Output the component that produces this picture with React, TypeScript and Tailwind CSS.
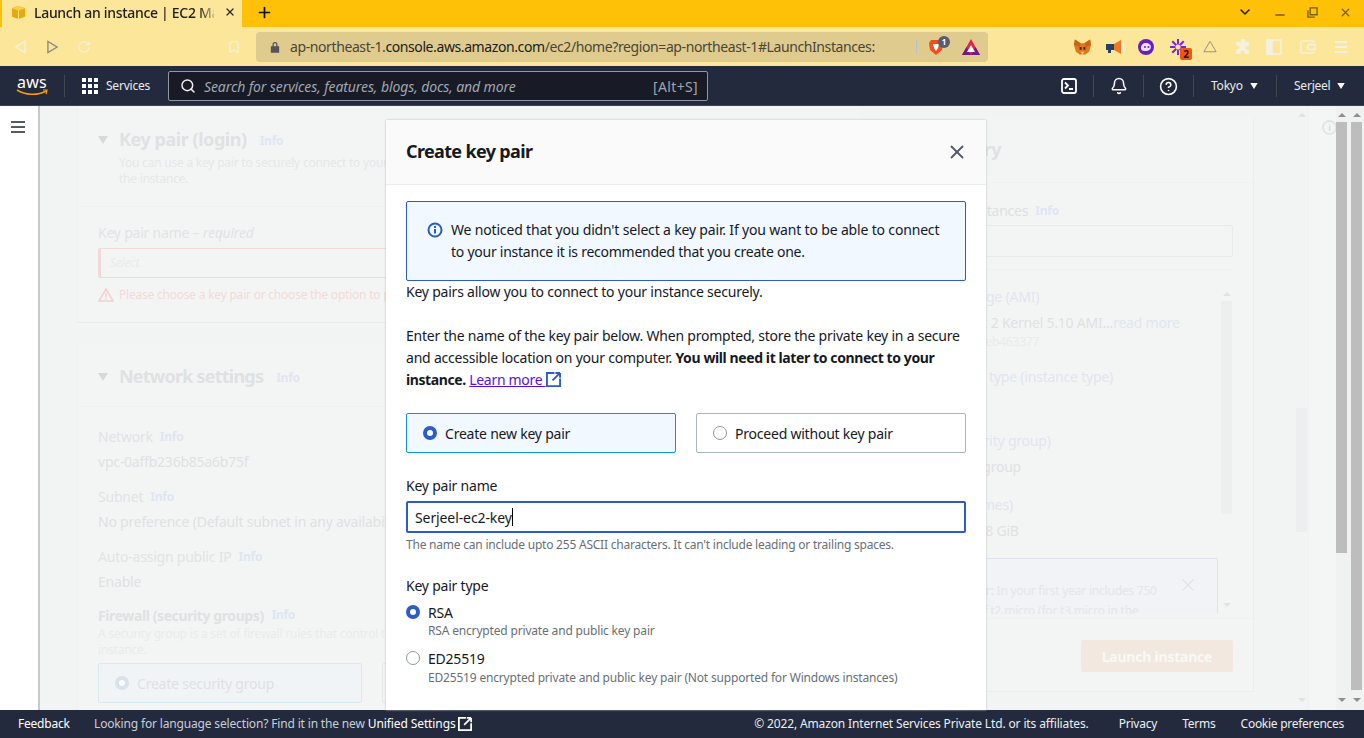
import React from 'react';
import { Bell, Bookmark, ChevronDown, CircleHelp, Minus, Plus, RotateCw, Search, X } from 'lucide-react';

const ExternalIcon: React.FC<{ className?: string }> = ({ className }) => (
  <svg viewBox="0 0 16 16" fill="none" stroke="currentColor" strokeWidth="2" className={className}>
    <path d="M9 1H1v14h14V7" />
    <path d="M15 1H10M15 1v5M15 1 7 9" />
  </svg>
);

const Caret: React.FC<{ className?: string }> = ({ className }) => (
  <svg viewBox="0 0 10 8" fill="currentColor" className={className}>
    <path d="M0 0h10L5 8z" />
  </svg>
);

const ScrollArrow: React.FC<{ up?: boolean; className?: string }> = ({ up, className }) => (
  <svg viewBox="0 0 8 4" fill="currentColor" className={`h-1 w-2 shrink-0 ${className ?? ''}`}>
    <path d={up ? 'M0 4h8L4 0z' : 'M0 0h8L4 4z'} />
  </svg>
);

const Radio: React.FC<{ on?: boolean }> = ({ on }) =>
  on ? (
    <span className="h-[14px] w-[14px] shrink-0 rounded-full border-[4px] border-[#2c5cc5] bg-white" />
  ) : (
    <span className="h-[14px] w-[14px] shrink-0 rounded-full border border-[#8d9b9c] bg-white" />
  );

const Info: React.FC<{ className?: string }> = ({ className }) => (
  <span className={`text-[12px] leading-4 font-bold text-[#dfe6f2] ${className ?? ''}`}>Info</span>
);

const TabStrip = () => (
  <div className="flex h-[27px] shrink-0 items-stretch bg-[#ffc107] pl-[2px]">
    <div className="flex w-[240px] items-center bg-[#fbe69a] pb-[3px] pl-[9px]">
      <svg viewBox="0 0 16 16" className="h-[15px] w-[15px] shrink-0">
        <path d="M8 1 15 3.500v9L8 15 1 12.500v-9z" fill="#e8a90f" />
        <path d="M1 3.500 8 6l7-2.500L8 1z" fill="#f9cf4a" />
        <path d="M8 6v9" stroke="#fbe69a" strokeWidth="1" />
      </svg>
      <span className="ml-[8px] w-[180px] overflow-hidden text-[14px] font-medium tracking-[-0.3px] whitespace-nowrap text-[#1d1d1d] [mask-image:linear-gradient(to_right,black_165px,transparent_184px)]">
        Launch an instance | EC2 Management Console
      </span>
      <X size={12} strokeWidth={2.6} className="ml-[10px] text-[#2a2a2a]" />
    </div>
    <div className="flex w-[44px] items-center justify-center pb-[3px]">
      <Plus size={17} strokeWidth={2.4} className="text-[#111111]" />
    </div>
    <div className="ml-auto flex items-center pr-[12px] pb-[3px]">
      <ChevronDown size={16} strokeWidth={2.4} className="mr-[20px] text-[#2a2410]" />
      <Minus size={14} strokeWidth={2.4} className="mr-[20px] mt-[6px] text-[#7a5f08]" />
      <svg viewBox="0 0 12 12" fill="none" stroke="#7a5f08" strokeWidth="1.500" className="mr-[21px] h-[11px] w-[11px]">
        <path d="M3.500 1h7.500v7.500H3.500zM1 3.500V11h7.500" />
      </svg>
      <X size={13} strokeWidth={2.4} className="text-[#7a5f08]" />
    </div>
  </div>
);

const Toolbar = () => (
  <div className="flex h-[39px] shrink-0 items-center bg-[#fbe69a] pl-[15px]">
    <svg viewBox="0 0 12 14" fill="none" stroke="#f5f1e1" strokeWidth="1.500" className="h-[14px] w-[11px]">
      <path d="M11 1v12L1 7z" />
    </svg>
    <svg viewBox="0 0 12 14" fill="none" stroke="#8b8a80" strokeWidth="1.500" className="ml-[21px] h-[14px] w-[11px]">
      <path d="M1 1v12l10-6z" />
    </svg>
    <RotateCw size={14} strokeWidth={2} className="ml-[19px] text-[#f5f1e1]" />
    <Bookmark size={14} strokeWidth={2} className="ml-[136px] text-[#f5f1e1]" />
    <div className="ml-[15px] flex h-[30px] w-[732px] items-center rounded-[4px] bg-[#decb8d] pl-[14px]">
      <svg viewBox="0 0 12 14" className="h-[12px] w-[10px] text-[#55525a]" fill="currentColor">
        <path d="M3 6V4a3 3 0 0 1 6 0v2h2v8H1V6zm1.500 0h3V4a1.500 1.500 0 0 0-3 0z" />
      </svg>
      <span className="ml-[10px] w-[615px] overflow-hidden text-[14px] tracking-[-0.4px] whitespace-nowrap text-[#4a463a]">
        ap-northeast-1.<span className="text-[#1c1c1c]">console.aws.amazon.com</span>/ec2/home?region=ap-northeast-1#LaunchInstances:
      </span>
      <span className="ml-[11px] h-[14px] w-px bg-[#b9c2c6]" />
      <span className="relative ml-[12px] flex">
        <svg viewBox="0 0 14 16" className="h-[16px] w-[14px]">
          <path d="M2 1h10l2 3-1 7-6 5-6-5-1-7z" fill="#f0501f" />
          <path d="M4 5h6L9 9l-2 3-2-3z" fill="#ffffff" />
        </svg>
        <span className="absolute -top-[3px] left-[9px] flex h-[12px] w-[12px] items-center justify-center rounded-full bg-[#5b5b6b] text-[8px] font-bold text-white">1</span>
      </span>
      <svg viewBox="0 0 18 16" className="ml-[19px] h-[16px] w-[18px]">
        <path d="M9 0 18 16H0z" fill="#e0234a" />
        <path d="M0 16 4.500 8 9 16z M9 16l4.500-8L18 16z" fill="#6c1f7f" />
        <path d="M9 6l4 7H5z" fill="#ffffff" />
      </svg>
    </div>
    <div className="ml-[86px] flex items-center">
      <svg viewBox="0 0 18 16" className="h-[16px] w-[17px]">
        <path d="M1 0 7 4h4l6-4 1 6-2 7-4 3H6l-4-3-2-7z" fill="#e2761b" />
        <path d="M1 0 7 4 6 8 0 6z M17 0 11 4l1 4 6-2z" fill="#c9641a" />
        <path d="M6 8h2v3H6zM10 8h2v3h-2z" fill="#3d2a1a" />
        <path d="M7 13h4l-2 3z" fill="#f3c9a0" />
      </svg>
      <svg viewBox="0 0 18 16" className="ml-[15px] h-[16px] w-[18px]">
        <path d="M0 5h8v6H5v3H2v-3H0z" fill="#24415f" />
        <path d="M8 5l7-4v14l-7-4z" fill="#f0762a" />
        <path d="M17 4v8" stroke="#fdfdfd" strokeWidth="1.500" />
      </svg>
      <svg viewBox="0 0 16 16" className="ml-[14px] h-[16px] w-[16px]">
        <circle cx="8" cy="8" r="8" fill="#6a1fc2" />
        <path d="M3 9c0-3 2-5 5-5s5 2 5 4-2 4-5 4c-2 0-5 0-5-3z" fill="#efe3fc" />
        <circle cx="7" cy="8" r="1" fill="#6a1fc2" />
        <circle cx="10.500" cy="8" r="1" fill="#6a1fc2" />
      </svg>
      <span className="relative ml-[16px] flex">
        <svg viewBox="0 0 16 16" className="h-[16px] w-[16px]" stroke="#7a22e8" strokeWidth="2">
          <path d="M8 0v5.500M8 10.500V16M0 8h5.500M10.500 8H16M2.300 2.300l4 4M9.700 9.700l4 4M13.700 2.300l-4 4M6.300 9.700l-4 4" />
        </svg>
        <span className="absolute top-[9px] left-[10px] flex h-[12px] w-[12px] items-center justify-center rounded-[2px] bg-[#f0570f] text-[10px] leading-none font-bold tracking-normal text-[#23170b]">2</span>
      </span>
      <svg viewBox="0 0 16 14" fill="none" stroke="#8c8a80" strokeWidth="1" className="ml-[17px] h-[13px] w-[14px]">
        <path d="M8 1 15 13H1z" />
      </svg>
      <svg viewBox="0 0 16 16" fill="#f5f1e1" className="ml-[18px] h-[16px] w-[16px]">
        <path d="M6 1.500a2 2 0 0 1 4 0V3h4v4h-1.500a2 2 0 0 0 0 4H14v4H9.500v-1.500a2 2 0 0 0-4 0V15H1v-4.500h1.500a2 2 0 0 0 0-4H1V3h5z" />
      </svg>
      <svg viewBox="0 0 16 16" fill="none" stroke="#f5f1e1" strokeWidth="1.500" className="ml-[15px] h-[16px] w-[16px]">
        <path d="M1 1h14v14H1z" />
        <path d="M1 1h5v14H1z" fill="#f5f1e1" />
      </svg>
      <svg viewBox="0 0 16 14" fill="none" stroke="#f5f1e1" strokeWidth="1.500" className="ml-[18px] h-[14px] w-[16px]">
        <path d="M14 3V2.500A1.500 1.500 0 0 0 12.500 1h-10A1.500 1.500 0 0 0 1 2.500v9A1.500 1.500 0 0 0 2.500 13h10a1.500 1.500 0 0 0 1.500-1.500V11" />
        <path d="M15 4.500h-5a2.500 2.500 0 0 0 0 5h5z" />
      </svg>
      <div className="ml-[19px] flex w-[12px] flex-col gap-[3px]">
        <span className="h-[2px] bg-[#f5f1e1]" />
        <span className="h-[2px] bg-[#f5f1e1]" />
        <span className="h-[2px] bg-[#f5f1e1]" />
      </div>
    </div>
  </div>
);

const NavDivider: React.FC<{ className?: string }> = ({ className }) => (
  <span className={`h-[22px] w-px bg-[#414750] ${className ?? ''}`} />
);

const AwsNav = () => (
  <div className="flex h-[40px] shrink-0 items-center border-b border-[#3b4358] bg-[#232a3d] pt-[1px] pl-[16px] text-white">
    <div className="flex w-[32px] flex-col items-center">
      <span className="h-[13px] text-[16px] leading-[13px] font-normal tracking-[0.2px] text-white">aws</span>
      <svg viewBox="0 0 32 8" fill="none" className="h-[8px] w-[32px]">
        <path d="M1 1c8 5 20 6 29 1" stroke="#ff9900" strokeWidth="1.500" />
        <path d="M27 1h4l-1 4" stroke="#ff9900" strokeWidth="1.200" />
      </svg>
    </div>
    <NavDivider className="ml-[16px]" />
    <div className="ml-[17px] grid grid-cols-3 gap-[2px]">
      {Array.from({ length: 9 }).map((_, i) => (
        <span key={i} className="h-[4px] w-[4px] bg-white" />
      ))}
    </div>
    <span className="ml-[8px] w-[45px] text-[12px] text-[#e8eaee]">Services</span>
    <div className="ml-[17px] flex h-[30px] w-[540px] items-center rounded-[2px] border border-[#8e97a3] bg-[#181b26] pr-[9px] pl-[11px]">
      <Search size={16} strokeWidth={2.2} className="text-[#f0f0f0]" />
      <span className="ml-[8px] text-[14px] tracking-[-0.1px] text-[#9ea6b1] italic">Search for services, features, blogs, docs, and more</span>
      <span className="ml-auto text-[14px] tracking-[0.35px] text-[#9ea6b1]">[Alt+S]</span>
    </div>
    <svg viewBox="0 0 16 16" fill="none" stroke="white" strokeWidth="1.800" className="ml-[353px] h-[16px] w-[16px]">
      <rect x="1" y="1" width="14" height="14" rx="2" />
      <path d="M4 4.500 7 7.500 4 10.500M8 11h4" />
    </svg>
    <NavDivider className="ml-[16px]" />
    <Bell size={18} strokeWidth={2} className="ml-[16px]" />
    <NavDivider className="ml-[15px]" />
    <CircleHelp size={19} strokeWidth={2} className="ml-[15px]" />
    <NavDivider className="ml-[15px]" />
    <span className="ml-[17px] w-[33px] text-[12px] text-[#e8eaee]">Tokyo</span>
    <Caret className="ml-[6px] h-[6px] w-[8px]" />
    <NavDivider className="ml-[18px]" />
    <span className="ml-[17px] w-[37px] text-[12px] text-[#e8eaee]">Serjeel</span>
    <Caret className="ml-[6px] h-[6px] w-[8px]" />
  </div>
);

const SectionHead: React.FC<{ title: string; titleClass: string; children?: React.ReactNode }> = ({ title, titleClass, children }) => (
  <div className="pl-[20px]">
    <div className="flex items-center">
      <Caret className="h-[8px] w-[10px] text-[#d6d8da]" />
      <h2 className={`ml-[11px] text-[18px] font-bold text-[#dfe1e3] ${titleClass}`}>{title}</h2>
      <Info className="ml-[13px] mt-[3px]" />
    </div>
    {children}
  </div>
);

const Field: React.FC<{ label: string; value: string }> = ({ label, value }) => (
  <div>
    <div className="flex h-[20px] items-center text-[14px] text-[#e1e3e5]">
      {label}
      <Info className="ml-[7px] mt-[1px]" />
    </div>
    <div className="mt-[6px] h-[20px] text-[14px] leading-5 whitespace-nowrap text-[#dfe1e3]">{value}</div>
  </div>
);

const LeftColumn = () => (
  <div className="w-[784px] shrink-0">
    <section className="h-[217px] border-b border-l border-[#e9ebeb] border-l-[#eff1f1] bg-[#f3f5f5]">
      <div className="h-[101px] border-b border-[#eff1f1] pt-[20px]">
        <SectionHead title="Key pair (login)" titleClass="tracking-[-0.45px]">
          <p className="ml-[21px] mt-[2px] text-[12px] leading-4 text-[#e5e7e8]">
            You can use a key pair to securely connect to your instance. Ensure that you have access to the selected key pair before you launch
            <br />
            the instance.
          </p>
        </SectionHead>
      </div>
      <div className="px-[20px] pt-[16px]">
        <div className="text-[14px] leading-5 text-[#e1e3e5]">
          Key pair name – <span className="italic">required</span>
        </div>
        <div className="mt-[5px] flex h-[30px] items-center rounded-[2px] border border-l-[3px] border-[#f2d8d8] pl-[9px] text-[12px] text-[#e9ebeb] italic">Select</div>
        <div className="mt-[8px] flex items-center text-[12px] text-[#f4d9d9]">
          <svg viewBox="0 0 16 14" className="h-[14px] w-[16px]" fill="none" stroke="#f2cfcf" strokeWidth="1.500">
            <path d="M8 1 15 13H1zM8 5v4M8 10v1.500" />
          </svg>
          <span className="ml-[5px]">Please choose a key pair or choose the option to proceed without a key pair</span>
        </div>
      </div>
    </section>
    <section className="mt-[20px] h-[400px] border-l border-[#eff1f1] bg-[#f3f5f5]">
      <div className="h-[64px] border-b border-[#eff1f1] pt-[20px]">
        <SectionHead title="Network settings" titleClass="tracking-[-0.78px]" />
      </div>
      <div className="flex flex-col gap-[14px] px-[20px] pt-[19px]">
        <Field label="Network" value="vpc-0affb236b85a6b75f" />
        <Field label="Subnet" value="No preference (Default subnet in any availability zone)" />
        <Field label="Auto-assign public IP" value="Enable" />
      </div>
      <div className="px-[20px] pt-[13px]">
        <div className="flex h-[20px] items-center text-[14px] font-bold tracking-[-0.4px] text-[#dfe1e3]">
          Firewall (security groups)
          <Info className="ml-[8px]" />
        </div>
        <p className="mt-[1px] text-[12px] leading-4 text-[#e9ebeb]">
          A security group is a set of firewall rules that control the traffic for your instance. Add rules to allow specific traffic to reach your
          <br />
          instance.
        </p>
        <div className="mt-[5px] flex gap-[20px]">
          <div className="flex h-[40px] w-[264px] items-center rounded-[2px] border border-[#d9e9f0] bg-[#f1f4f7] pl-[16px] text-[14px] text-[#dfe1e3]">
            <span className="h-[14px] w-[14px] rounded-full border-[4px] border-[#d9e1ee] bg-white" />
            <span className="ml-[8px]">Create security group</span>
          </div>
          <div className="h-[40px] w-[264px] rounded-[2px] border border-[#e6e8e8]" />
        </div>
      </div>
    </section>
  </div>
);

const SummaryLine: React.FC<{ className?: string; children: React.ReactNode }> = ({ className, children }) => (
  <div className={`whitespace-nowrap ${className ?? ''}`}>{children}</div>
);

const SummaryCard = () => (
  <aside className="ml-[20px] mt-[12px] flex h-[574px] w-[373px] shrink-0 flex-col border-r border-b border-[#eceeee] bg-[#f3f5f5]">
    <div className="h-[65px] shrink-0 border-b border-[#f0f2f2] pt-[18px] pl-[38px] text-[18px] font-bold tracking-[-0.55px] text-[#dfe1e3]">Summary</div>
    <div className="flex h-[86px] shrink-0 flex-col px-[20px] pt-[17px]">
      <div className="flex h-[20px] items-center justify-end pr-[174px] text-[14px]">
        <span className="whitespace-nowrap text-[#dde0e2]">Number of instances</span>
        <Info className="ml-[7px] mt-[1px]" />
      </div>
      <div className="mt-[5px] h-[32px] rounded-[2px] border border-[#e9ebeb]" />
    </div>
    <div className="mr-[21px] ml-[20px] flex h-[345px] shrink-0 overflow-hidden border-t border-[#eff1f1] pt-[17px]">
      <div className="min-w-0 flex-1 text-[14px] leading-5">
        <SummaryLine className="text-[#e0e5ef]">Software Image (AMI)</SummaryLine>
        <SummaryLine className="mt-[6px] -ml-[4px] text-[#dfe1e3]">
          Amazon Linux 2 Kernel 5.10 AMI...<span className="text-[#e0e5ef]">read more</span>
        </SummaryLine>
        <SummaryLine className="mt-[1px] -ml-[7px] text-[12px] leading-4 text-[#e9ebeb]">ami-0b7546d835eb463377</SummaryLine>
        <SummaryLine className="mt-[17px] text-[#e0e5ef]">Virtual server type (instance type)</SummaryLine>
        <SummaryLine className="mt-[6px] text-[#dfe1e3]">t2.micro</SummaryLine>
        <SummaryLine className="mt-[18px] -ml-[2px] text-[#e0e5ef]">Firewall (security group)</SummaryLine>
        <SummaryLine className="mt-[6px] -ml-[4px] text-[#dfe1e3]">New security group</SummaryLine>
        <SummaryLine className="mt-[18px] -ml-[3px] text-[#e0e5ef]">Storage (volumes)</SummaryLine>
        <SummaryLine className="mt-[6px] text-[#dfe1e3]">1 volume(s) - 8 GiB</SummaryLine>
        <div className="mt-[17px] flex h-[70px] w-[317px] justify-between rounded-[2px] border border-[#dfe4f0] bg-[#f1f3f7] pt-[22px] pr-[19px] text-[12px] leading-5 text-[#e4e6e8]">
          <div className="pl-[40px]">
            <b>Free tier:</b> In your first year includes 750
            <br />
            hours of t2.micro (for t3.micro in the
          </div>
          <X size={20} strokeWidth={1.5} className="-mt-[6px] text-[#e1e3e5]" />
        </div>
      </div>
      <div className="flex h-[324px] w-[11px] shrink-0 flex-col items-center text-[#e1e3e3]">
        <ScrollArrow up className="mt-[5px]" />
        <div className="mt-[5px] h-[213px] w-full shrink-0 bg-[#edefef]" />
        <ScrollArrow className="mt-auto mb-[4px]" />
      </div>
    </div>
    <div className="mt-[4px] flex flex-1 justify-end border-t border-[#eff1f1] pt-[21px] pr-[20px]">
      <div className="flex h-[32px] w-[152px] items-center justify-center rounded-[2px] bg-[#f2e8df] text-[14px] font-bold text-[#f8f8f6]">Launch instance</div>
    </div>
  </aside>
);

const PageScrollbar: React.FC<{ thumbHeight: number }> = ({ thumbHeight }) => (
  <div className="flex h-full w-[11px] flex-col items-center pt-[7px] pb-[8px] text-[#8f8f8f]">
    <ScrollArrow up />
    <div className="mt-[5px] w-full bg-[#bdbdbd]" style={{ height: thumbHeight }} />
    <ScrollArrow className="mt-auto" />
  </div>
);

const Modal = () => (
  <div className="absolute top-[14px] bottom-0 left-[386px] flex w-[600px] flex-col overflow-hidden bg-white text-[14px] text-[#16191f] shadow-[0_0_2px_#b8bcbc]">
    <div className="flex h-[65px] shrink-0 items-center justify-between border-b border-[#eaeded] bg-[#fafafa] pr-[18px] pb-[2px] pl-[20px]">
      <h2 className="text-[18px] font-bold tracking-[-0.65px]">Create key pair</h2>
      <X size={22} strokeWidth={2} className="mt-[2px] text-[#545b64]" />
    </div>
    <div className="flex-1 px-[20px] pt-[16px]">
      <div className="flex h-[80px] rounded-[2px] border border-[#2c5cc5] bg-[#f1f8ff] pt-[17px] pr-[20px] pl-[20px]">
        <svg viewBox="0 0 16 16" fill="none" stroke="#2c5cc5" strokeWidth="2" className="mt-[3px] h-[16px] w-[16px] shrink-0">
          <circle cx="8" cy="8" r="6.500" />
          <path d="M8 7v4.500M8 4v2" />
        </svg>
        <p className="ml-[8px] leading-[22px]">
          <span className="tracking-[-0.17px]">We noticed that you didn't select a key pair. If you want to be able to connect</span>
          <br />
          <span className="tracking-[-0.25px]">to your instance it is recommended that you create one.</span>
        </p>
      </div>
      <p className="leading-[22px]">Key pairs allow you to connect to your instance securely.</p>
      <p className="mt-[22px] leading-[22px]">
        Enter the name of the key pair below. When prompted, store the private key in a secure and accessible location on your computer.{' '}
        <b className="tracking-[-0.4px]">You will need it later to connect to your instance.</b>{' '}
        <span className="whitespace-nowrap">
          <span className="tracking-[-0.3px] text-[#5a0fe0] underline">Learn more </span>
          <ExternalIcon className="inline h-[15px] w-[15px] align-[-2px] text-[#2c5cc5]" />
        </span>
      </p>
      <div className="mt-[22px] flex gap-[20px]">
        <div className="flex h-[40px] flex-1 items-center rounded-[2px] border border-[#0a97d0] bg-[#f1f8ff] pl-[16px]">
          <Radio on />
          <span className="ml-[8px]">Create new key pair</span>
        </div>
        <div className="flex h-[40px] flex-1 items-center rounded-[2px] border border-[#aab7b8] pl-[16px]">
          <Radio />
          <span className="ml-[8px]">Proceed without key pair</span>
        </div>
      </div>
      <div className="mt-[23px] leading-[20px]">Key pair name</div>
      <div className="mt-[5px] flex h-[32px] items-center rounded-[2px] border-2 border-[#2c5cc5] pl-[7px]">
        <span className="tracking-[-0.1px]">Serjeel-ec2-key</span>
        <span className="h-[18px] w-px bg-black" />
      </div>
      <div className="mt-[4px] text-[12px] leading-4 text-[#687078]">The name can include upto 255 ASCII characters. It can't include leading or trailing spaces.</div>
      <div className="mt-[23px] leading-[20px]">Key pair type</div>
      <div className="mt-[6px] flex h-[20px] items-center">
        <Radio on />
        <span className="ml-[8px]">RSA</span>
      </div>
      <div className="mt-[1px] pl-[22px] text-[12px] leading-4 tracking-[-0.17px] text-[#687078]">RSA encrypted private and public key pair</div>
      <div className="mt-[9px] flex h-[20px] items-center">
        <Radio />
        <span className="ml-[8px]">ED25519</span>
      </div>
      <div className="mt-[2px] pl-[22px] text-[12px] leading-4 tracking-[-0.18px] text-[#687078]">ED25519 encrypted private and public key pair (Not supported for Windows instances)</div>
    </div>
  </div>
);

const Footer = () => (
  <div className="flex h-[28px] shrink-0 items-center bg-[#232a3d] pl-[18px] text-[12px] text-[#c9ced6]">
    <span className="w-[51px] text-white">Feedback</span>
    <span className="ml-[25px] tracking-[-0.16px]">Looking for language selection? Find it in the new</span>
    <span className="ml-[3px] tracking-[-0.1px] text-white">Unified Settings</span>
    <ExternalIcon className="ml-[2px] h-[14px] w-[14px] text-white" />
    <span className="ml-auto tracking-[-0.14px] text-[#eceef1]">© 2022, Amazon Internet Services Private Ltd. or its affiliates.</span>
    <span className="ml-[30px] text-[#eceef1]">Privacy</span>
    <span className="ml-[25px] text-[#eceef1]">Terms</span>
    <span className="mr-[20px] ml-[25px] tracking-[-0.28px] text-[#eceef1]">Cookie preferences</span>
  </div>
);

export default function App() {
  return (
    <div className="flex h-[738px] w-[1364px] flex-col overflow-hidden font-['Noto_Sans',sans-serif] tracking-[-0.22px]">
      <TabStrip />
      <Toolbar />
      <AwsNav />
      <main className="relative flex min-h-0 flex-1 bg-[#f2f4f4]">
        <div className="w-[38px] shrink-0 bg-white pt-[15px] pl-[11px]">
          <div className="flex w-[14px] flex-col gap-[3px]">
            <span className="h-[2px] bg-[#545b64]" />
            <span className="h-[2px] bg-[#545b64]" />
            <span className="h-[2px] bg-[#545b64]" />
          </div>
        </div>
        <div className="flex w-[1270px] shrink-0 overflow-hidden border-l-2 border-[#c6caca] pl-[37px]">
          <LeftColumn />
          <SummaryCard />
          <div className="ml-[42px] flex h-full w-[11px] shrink-0 flex-col items-center pt-[7px] pb-[8px] text-[#e0e2e2]">
            <ScrollArrow up />
            <div className="mt-[291px] h-[124px] w-full shrink-0 bg-[#ecefef]" />
            <ScrollArrow className="mt-auto" />
          </div>
        </div>
        <div className="flex w-[56px] shrink-0 bg-[#f0f1f1]">
          <div className="w-[28px] shrink-0 overflow-hidden border-l border-[#eff1f1] bg-[#f4f6f6] pt-[14px] pl-[13px]">
            <div className="flex h-[15px] w-[15px] items-center justify-center rounded-full border-2 border-[#e3e5e5] text-[9px] font-bold text-[#dadcdc]">i</div>
          </div>
          <PageScrollbar thumbHeight={431} />
          <div className="w-[4px]" />
          <PageScrollbar thumbHeight={568} />
        </div>
        <Modal />
      </main>
      <Footer />
    </div>
  );
}
